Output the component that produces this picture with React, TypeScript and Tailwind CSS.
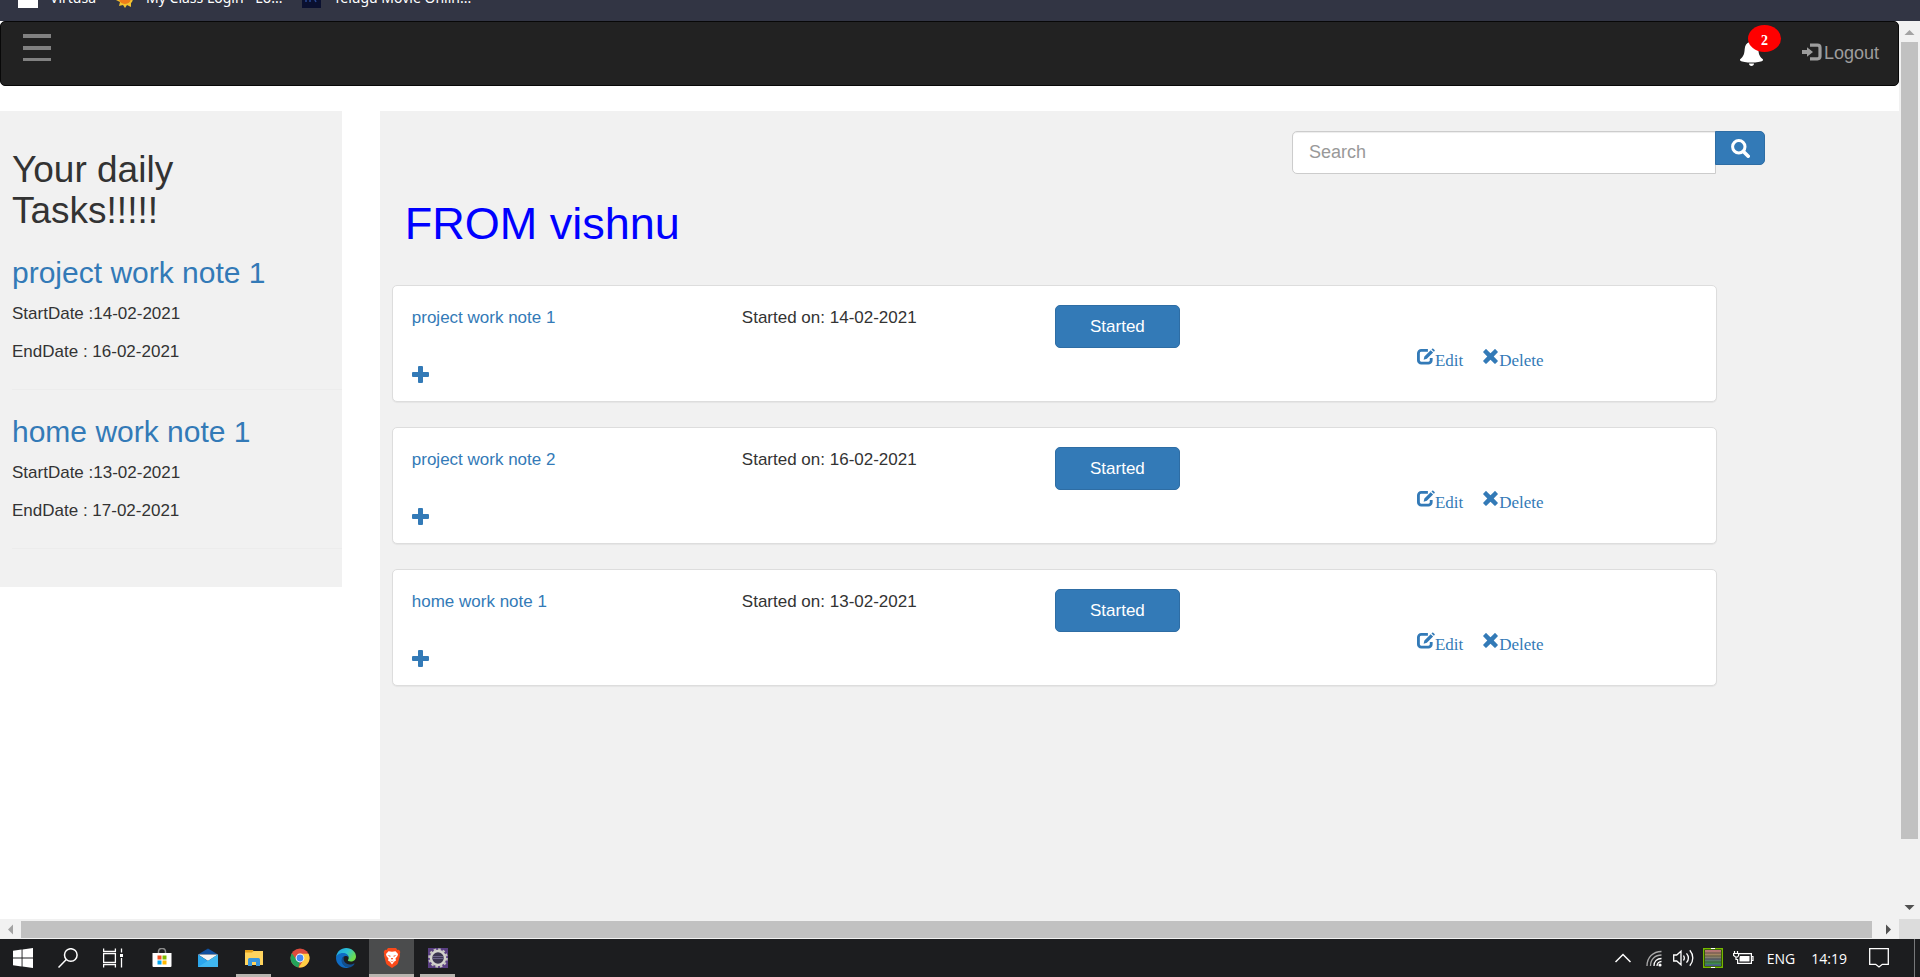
import React from "react";

type Task = { title: string; start: string; end: string };
type Note = { title: string; started: string };

const tasks: Task[] = [
  { title: "project work note 1", start: "14-02-2021", end: "16-02-2021" },
  { title: "home work note 1", start: "13-02-2021", end: "17-02-2021" },
];

const notes: Note[] = [
  { title: "project work note 1", started: "14-02-2021" },
  { title: "project work note 2", started: "16-02-2021" },
  { title: "home work note 1", started: "13-02-2021" },
];

/* ---------- Glyph icons ---------- */

const MenuIcon = () => (
  <svg width="28" height="28" viewBox="0 0 28 28" fill="#818181" aria-hidden="true">
    <path d="M0 0h28v4H0zM0 12h28v4H0zM0 24h28v3H0z" />
  </svg>
);

const BellIcon = () => (
  <svg width="23" height="26" viewBox="0 0 23 26" fill="#fff" aria-hidden="true">
    <path d="M11.500 0c1.200 0 1.800.8 1.800 2 3.300.9 4.700 3.500 5 7 .3 4.500 1 7.200 4.300 10 .6.600.5 1.200-.1 1.700-1.600 1.200-6 1.800-11 1.800s-9.400-.6-11-1.800c-.6-.5-.7-1.100-.1-1.700 3.300-2.800 4-5.500 4.300-10 .3-3.500 1.700-6.100 5-7 0-1.200.6-2 1.800-2zM9 23.500h5c0 1.500-1 2.500-2.500 2.500S9 25 9 23.500z" />
  </svg>
);

const LoginIcon = () => (
  <svg width="20" height="18" viewBox="0 0 20 18" aria-hidden="true">
    <path d="M0 7h5V4.200l6 4.800-6 4.800V11H0z" fill="#9d9d9d" />
    <path d="M8 2.200h7.500a2.500 2.500 0 0 1 2.500 2.500v8.600a2.500 2.500 0 0 1-2.500 2.500H8" fill="none" stroke="#9d9d9d" strokeWidth="3.200" />
  </svg>
);

const SearchIcon = () => (
  <svg width="19" height="19" viewBox="0 0 19 19" fill="none" stroke="#fff" aria-hidden="true">
    <circle cx="7.800" cy="7.800" r="6.200" strokeWidth="3" />
    <path d="M12.400 12.400l4.800 4.800" strokeWidth="3.600" strokeLinecap="round" />
  </svg>
);

const PlusIcon = () => (
  <svg width="17" height="17" viewBox="0 0 17 17" fill="#337ab7" aria-hidden="true">
    <path d="M7 0h3a1 1 0 0 1 1 1v5h5a1 1 0 0 1 1 1v3a1 1 0 0 1-1 1h-5v5a1 1 0 0 1-1 1H7a1 1 0 0 1-1-1v-5H1a1 1 0 0 1-1-1V7a1 1 0 0 1 1-1h5V1a1 1 0 0 1 1-1z" />
  </svg>
);

const EditIcon = () => (
  <svg width="18" height="17" viewBox="0 0 19 17" aria-hidden="true">
    <path d="M11.500 2H4.500A3 3 0 0 0 1.500 5v7.500a3 3 0 0 0 3 3h7.500a3 3 0 0 0 3-3V10" fill="none" stroke="#337ab7" strokeWidth="3" />
    <path d="M7 12l.8-3.600 6.600-6.600 2.600 2.600-6.600 6.600zM15.300 1l.8-.8c.3-.3.700-.3 1 0l1.500 1.500c.3.300.3.700 0 1l-.8.800z" fill="#337ab7" />
  </svg>
);

const RemoveIcon = () => (
  <svg width="15" height="15" viewBox="0 0 15 15" fill="#337ab7" aria-hidden="true">
    <path d="M3.600.4l3.900 3.900L11.400.4c.4-.4.800-.4 1.200 0l2 2c.4.400.4.800 0 1.200L10.700 7.500l3.900 3.900c.4.400.4.800 0 1.200l-2 2c-.4.400-.8.400-1.200 0l-3.900-3.900-3.900 3.900c-.4.400-.8.400-1.200 0l-2-2c-.4-.4-.4-.8 0-1.200l3.900-3.900L.4 3.600C0 3.200 0 2.800.4 2.400l2-2c.4-.4.800-.4 1.200 0z" />
  </svg>
);

/* ---------- Browser chrome ---------- */

const BookmarksBar = () => (
  <div className="h-[21px] shrink-0 overflow-hidden bg-[#323544]">
    <div className="-mt-3.5 flex h-6 items-center whitespace-nowrap pl-[18px] font-['Noto_Sans','Open_Sans',sans-serif] text-[14px] leading-6 text-white">
      <span className="flex items-center gap-3">
        <svg width="20" height="20" viewBox="0 0 20 20" aria-hidden="true"><path d="M0 0h20v20H0z" fill="#fff" /></svg>
        Virtusa
      </span>
      <span className="ml-5 flex items-center gap-3">
        <svg width="18" height="20" viewBox="0 0 18 20" aria-hidden="true">
          <path d="M0 6l4 1V1l5 4 5-4v6l4 2-2 5-1 1 0 4-4-2-2 3-2-3-4 1 1-4-4-2z" fill="#f2c230" />
          <circle cx="9" cy="10" r="6" fill="#ef7d1a" />
        </svg>
        My Class Login - Lo...
      </span>
      <span className="ml-5 flex items-center gap-3">
        <svg width="19" height="20" viewBox="0 0 19 20" aria-hidden="true">
          <path d="M0 0h19v20H0z" fill="#0a1030" />
          <path d="M4 8v6M8 8v6M11 8l3 6" stroke="#27468f" strokeWidth="1.500" />
        </svg>
        Telugu Movie Onlin...
      </span>
    </div>
  </div>
);

const VerticalScrollbar = () => (
  <div className="flex w-[21px] shrink-0 flex-col items-center bg-[#f1f1f1]" aria-hidden="true">
    <svg width="21" height="21" viewBox="0 0 21 21"><path d="M5.500 14L10.500 9l5 5z" fill="#a3a3a3" /></svg>
    <div className="mr-px w-[17px] grow-27 bg-[#c1c1c1]" />
    <div className="grow-2" />
    <svg width="21" height="21" viewBox="0 0 21 21"><path d="M5.500 7l5 5 5-5z" fill="#505050" /></svg>
  </div>
);

const HorizontalScrollbar = () => (
  <div className="flex h-5 shrink-0 items-center bg-[#f1f1f1]" aria-hidden="true">
    <svg width="21" height="20" viewBox="0 0 21 20"><path d="M13 5.500L8 10.500l5 5z" fill="#a3a3a3" /></svg>
    <div className="mt-px h-[17px] grow bg-[#c1c1c1]" />
    <svg width="27" height="20" viewBox="0 0 27 20"><path d="M14 5.500l5 5-5 5z" fill="#505050" /></svg>
    <div className="h-5 w-[21px] bg-[#dcdcdc]" />
  </div>
);

/* ---------- Page ---------- */

const Navbar = () => (
  <nav className="flex h-[65px] items-start justify-between rounded-[5px] border border-[#080808] bg-[#222]">
    <button type="button" aria-label="Open menu" className="ml-[22px] mt-3">
      <MenuIcon />
    </button>
    <div className="flex items-start pr-[19px]">
      <button type="button" aria-label="Notifications" className="relative mr-[39px] mt-[18px]">
        <BellIcon />
        <span className="absolute -top-[15px] left-2 flex h-[27px] w-[33px] items-center justify-center rounded-[50%] bg-[red] pt-1 font-['Liberation_Serif',serif] text-[14px] font-bold leading-none text-white">
          2
        </span>
      </button>
      <a href="#logout" className="mt-[19px] flex items-start gap-[2px] text-[18px] leading-[25px] text-[#9d9d9d]">
        <span className="pt-0.5"><LoginIcon /></span>
        Logout
      </a>
    </div>
  </nav>
);

const Sidebar = () => (
  <aside className="w-[18%] shrink-0 self-start bg-[#f1f1f1] pb-[38px] pl-3 pt-[38px]">
    <h2 className="w-[200px] text-[37px] leading-[41px]">Your daily Tasks!!!!!</h2>
    {tasks.map((task) => (
      <section key={task.title} className="border-b border-[#ececec] pb-[25px] pt-[25px]">
        <h3 className="text-[30px] leading-[33px]">
          <a href="#task" className="text-[#337ab7]">{task.title}</a>
        </h3>
        <p className="mt-[12px]">StartDate :{task.start}</p>
        <p className="mt-[13px]">EndDate : {task.end}</p>
      </section>
    ))}
  </aside>
);

const NoteCard = ({ note }: { note: Note }) => (
  <article className="grid h-[117px] grid-cols-[330fr_313fr_362fr_280fr] rounded-[5px] border border-[#ddd] bg-white px-[19px] pt-[19px] shadow-[0_1px_1px_rgba(0,0,0,0.05)]">
    <div className="flex flex-col items-start">
      <a href="#note" className="text-[#337ab7]">{note.title}</a>
      <button type="button" aria-label={`Add to ${note.title}`} className="mt-[36px]">
        <PlusIcon />
      </button>
    </div>
    <p>Started on: {note.started}</p>
    <div>
      <button type="button" className="h-[43px] w-[125px] rounded-[5px] border border-[#2e6da4] bg-[#337ab7] text-white">
        Started
      </button>
    </div>
    <div className="mt-[43px] flex items-start gap-5 font-['Liberation_Serif',serif] text-[#337ab7]">
      <a href="#edit" className="flex items-start">
        <EditIcon />
        Edit
      </a>
      <a href="#delete" className="flex items-start">
        <span className="pr-px pt-px"><RemoveIcon /></span>
        Delete
      </a>
    </div>
  </article>
);

const Main = () => (
  <main className="ml-[2%] min-w-0 flex-1 bg-[#f1f1f1] pl-3 pt-5">
    <form className="mr-[134px] flex items-start justify-end" onSubmit={(e) => e.preventDefault()}>
      <input
        type="text"
        aria-label="Search"
        placeholder="Search"
        className="-mr-px h-[43px] w-[424px] rounded-l-[5px] border border-[#ccc] bg-white px-4 text-[18px] shadow-[inset_0_1px_1px_rgba(0,0,0,0.075)] outline-none placeholder:text-[#999]"
      />
      <button
        type="submit"
        aria-label="Submit search"
        className="flex h-[34px] w-[50px] items-center justify-center rounded-r-[5px] border border-[#2e6da4] bg-[#337ab7]"
      >
        <SearchIcon />
      </button>
    </form>
    <h1 className="ml-[13px] mt-[25px] text-[45px] leading-[50px] text-[blue]">FROM vishnu</h1>
    <div className="mr-[182px] mt-[36px] flex flex-col gap-[25px]">
      {notes.map((note) => (
        <NoteCard key={note.title} note={note} />
      ))}
    </div>
  </main>
);

/* ---------- Taskbar ---------- */

const WindowsLogo = () => (
  <svg width="20" height="20" viewBox="0 0 20 20" fill="#fff" aria-hidden="true">
    <path d="M0 2.700l8.600-1.200v8H0zM9.500 1.400L20 0v9.500H9.500zM0 10.500h8.600v8L0 17.300zM9.500 10.500H20V20L9.500 18.600z" />
  </svg>
);

const TaskSearch = () => (
  <svg width="20" height="20" viewBox="0 0 20 20" fill="none" stroke="#fff" strokeWidth="1.500" aria-hidden="true">
    <circle cx="12.800" cy="7" r="6.300" />
    <path d="M8.300 11.500L.5 19.500" />
  </svg>
);

const TaskView = () => (
  <svg width="20" height="20" viewBox="0 0 20 20" fill="none" stroke="#fff" strokeWidth="1.300" aria-hidden="true">
    <path d="M.6.500v3h11.800v-3M.6 19.500v-3h11.800v3M.6 5.600h11.800v8.800H.6zM18.500.5v4M18.500 10v9.500" />
    <path d="M17 6h3v3h-3z" fill="#fff" stroke="none" />
  </svg>
);

const StoreIcon = () => (
  <svg width="20" height="20" viewBox="0 0 20 20" aria-hidden="true">
    <path d="M6.500 5V3.500a3 3 0 0 1 3-3h1a3 3 0 0 1 3 3V5" fill="none" stroke="#8b8b8b" strokeWidth="1.500" />
    <path d="M.5 5h19v13a1 1 0 0 1-1 1h-17a1 1 0 0 1-1-1z" fill="#fff" />
    <path d="M5.500 7.500h4v4h-4z" fill="#f25022" />
    <path d="M10.500 7.500h4v4h-4z" fill="#7fba00" />
    <path d="M5.500 12.500h4v4h-4z" fill="#00a4ef" />
    <path d="M10.500 12.500h4v4h-4z" fill="#ffb900" />
  </svg>
);

const MailIcon = () => (
  <svg width="20" height="20" viewBox="0 0 20 20" aria-hidden="true">
    <path d="M10 .5l10 6H0z" fill="#0f4f9e" />
    <path d="M0 6.500h20L10 13z" fill="#f4f4f4" />
    <path d="M0 6.500l10 6.500 10-6.500V19H0z" fill="#2ba6ec" />
    <path d="M20 6.500L0 19h20z" fill="#4cc3f4" opacity="0.600" />
  </svg>
);

const ExplorerIcon = () => (
  <svg width="20" height="20" viewBox="0 0 20 20" aria-hidden="true">
    <path d="M1 2h8l1 2v3H1z" fill="#e5a11b" />
    <path d="M1 4.500h7L9.500 3H19v14H1z" fill="#ffd45e" />
    <path d="M4 18v-6.500a1.500 1.500 0 0 1 1.500-1.500h9a1.500 1.500 0 0 1 1.500 1.500V18h-4v-4H8v4z" fill="#3a96dd" />
  </svg>
);

const ChromeIcon = () => (
  <svg width="20" height="20" viewBox="0 0 20 20" aria-hidden="true">
    <circle cx="10" cy="10" r="9.500" fill="#dd4b3e" />
    <path d="M1.800 5.200L7.200 12.500 10 14l-1.600 5.400A9.500 9.500 0 0 1 1.800 5.200z" fill="#23a35a" />
    <path d="M10 5.800h8.500A9.500 9.500 0 0 1 8.600 19.400L13.500 12z" fill="#ffce44" />
    <circle cx="10" cy="10" r="4.400" fill="#fff" />
    <circle cx="10" cy="10" r="3.400" fill="#4587f3" />
  </svg>
);

const EdgeIcon = () => (
  <svg width="20" height="20" viewBox="0 0 20 20" aria-hidden="true">
    <defs>
      <linearGradient id="edgeTop" x1="0" y1="0" x2="1" y2="0.500">
        <stop offset="0" stopColor="#1fa0e6" />
        <stop offset="0.550" stopColor="#2cc3d3" />
        <stop offset="1" stopColor="#6fdc4a" />
      </linearGradient>
    </defs>
    <path d="M.2 9C.6 3.800 5 0 10.200 0 16 0 20 4.200 20 8.500c0 3-2.400 5-5.200 5-2.300 0-3.300-.8-2.800-1.500.4-.6.700-1.200.7-2C12.700 7.500 10.500 6 8 6 4.500 6 1.500 7.500.2 9z" fill="url(#edgeTop)" />
    <path d="M0 10c0-2.800 3.200-5 7-5 3.300 0 5.500 2 5.700 4.300C12 8.500 10.500 8 9.500 8 7 8.200 5.800 10.500 6 12.500 6.300 16.500 10 19.500 13.500 19.400 12.500 19.800 11 20 10 20 4.500 20 0 15.500 0 10z" fill="#0f6cc4" />
    <path d="M8 9c-1.500 3.500 1.500 7.500 6 7.500 1.800 0 3-.5 4-1 .5-.2.800.2.500.6C17 18.200 15 19.500 13 19.500 9 19.500 5.500 16 5.500 12.500 5.500 10.800 6.500 9.500 8 9z" fill="#134f8e" />
  </svg>
);

const BraveIcon = () => (
  <svg width="20" height="20" viewBox="0 0 20 20" aria-hidden="true">
    <path d="M6 0h8l1.500 2 1.500-.3L18.300 4l-.6 2 .3 1.500-2 7.500c-.3 1-.8 1.500-1.500 2L10 20l-4.500-3c-.7-.5-1.200-1-1.500-2L2 7.500 2.300 6l-.6-2L3 1.700 4.500 2z" fill="#fb4a1a" />
    <path d="M6.500 3.300L10 3.800l3.500-.5L16 6l-.5 2-2 2.500.5 2-2 1.300L10 16.500l-2-2.700-2-1.300.5-2-2-2.500L4 6z" fill="#fff" />
    <path d="M5.500 7l3 .8-.3 1.200zM14.500 7l-3 .8.3 1.200zM8.800 10h2.400L10 12zM8 12.500l2 1 2-1-2 1.700z" fill="#fb4a1a" />
  </svg>
);

const GearIcon = () => (
  <svg width="20" height="20" viewBox="0 0 20 20" aria-hidden="true">
    <path d="M0 0h20v20H0z" fill="#5a3f83" />
    <circle cx="10" cy="10" r="8.800" fill="none" stroke="#c4c4be" strokeWidth="2" strokeDasharray="2.600 2" />
    <circle cx="10" cy="10" r="7" fill="#3b3550" stroke="#d3d3cd" strokeWidth="2.500" />
    <path d="M5 8.500h10M4.500 10.500h11" stroke="#6a6288" strokeWidth="1" />
  </svg>
);

type App = { name: string; icon: React.ReactNode; state?: "open" | "active" };

const systemApps: App[] = [
  { name: "Start", icon: <WindowsLogo /> },
  { name: "Find", icon: <TaskSearch /> },
  { name: "Task View", icon: <TaskView /> },
];

const pinnedApps: App[] = [
  { name: "Store", icon: <StoreIcon /> },
  { name: "Mail", icon: <MailIcon /> },
  { name: "Explorer", icon: <ExplorerIcon />, state: "open" },
  { name: "Chrome", icon: <ChromeIcon /> },
  { name: "Edge", icon: <EdgeIcon /> },
  { name: "Brave", icon: <BraveIcon />, state: "active" },
  { name: "Eclipse", icon: <GearIcon />, state: "open" },
];

const TaskButton = ({ app }: { app: App }) => (
  <button
    type="button"
    aria-label={app.name}
    className={`flex h-[38px] w-[45px] flex-col items-center justify-between pt-[9px] ${app.state === "active" ? "bg-[#4b4c4d]" : ""}`}
  >
    {app.icon}
    {app.state && <span className={`h-[3px] bg-[#b8b4af] ${app.state === "active" ? "w-full" : "w-[35px]"}`} />}
  </button>
);

const Taskbar = () => (
  <footer className="flex h-[38px] shrink-0 items-center justify-between bg-[#1c1d1f] text-white">
    <div className="flex">
      {systemApps.map((app) => (
        <TaskButton key={app.name} app={app} />
      ))}
      <div className="ml-1 flex gap-px">
        {pinnedApps.map((app) => (
          <TaskButton key={app.name} app={app} />
        ))}
      </div>
    </div>
    <div className="flex h-full items-center font-['Open_Sans','Noto_Sans',sans-serif] text-[14px]">
      <svg className="mr-[15px]" width="16" height="10" viewBox="0 0 16 10" fill="none" stroke="#fff" strokeWidth="1.500" aria-hidden="true">
        <path d="M.5 9L8 1.500 15.500 9" />
      </svg>
      <svg className="mr-[11px]" width="16" height="17" viewBox="0 0 16 17" fill="none" strokeWidth="1.300" aria-hidden="true">
        <path d="M1 16C1 7.500 7 1.500 15.500 1.500M4.500 16C4.500 9.500 9 5 15.500 5" stroke="#a8a8a8" />
        <path d="M8 16c0-4.500 3-7.500 7.500-7.500M11 16c0-2.500 2-4.500 4.500-4.500" stroke="#fff" />
        <circle cx="14" cy="15" r="1.600" fill="#fff" />
      </svg>
      <svg className="mr-[9px]" width="21" height="18" viewBox="0 0 21 18" fill="none" stroke="#fff" strokeWidth="1.300" aria-hidden="true">
        <path d="M.7 6h3L8 2.200v13.600L3.700 12h-3zM10.500 6.500c1 1.500 1 3.500 0 5M13.500 4.300c2.300 2.800 2.300 6.600 0 9.400M16.800 1.200c4 4.600 4 11 0 15.600" />
      </svg>
      <svg className="mr-2.5" width="20" height="20" viewBox="0 0 20 20" aria-hidden="true">
        <defs>
          <linearGradient id="chipFill" x1="0" y1="0" x2="0" y2="1">
            <stop offset="0" stopColor="#b8727a" />
            <stop offset="0.350" stopColor="#9f8a5c" />
            <stop offset="0.600" stopColor="#65707f" />
            <stop offset="0.800" stopColor="#3c9a3c" />
            <stop offset="1" stopColor="#4a4a9c" />
          </linearGradient>
        </defs>
        <path d="M.7.700h18.600v18.600H.7z" fill="#0d1a0d" stroke="#76b900" strokeWidth="1.400" />
        <path d="M2 2h16v16H2z" fill="url(#chipFill)" />
        <path d="M2 5h16M2 8h16M2 11h16M2 14h16" stroke="#333" strokeWidth="0.600" />
        <path d="M8 0h4v1H8zM8 19h4v1H8z" fill="#fff" />
      </svg>
      <svg className="mr-[13px]" width="21" height="14" viewBox="0 0 21 14" fill="none" stroke="#fff" strokeWidth="1.200" aria-hidden="true">
        <path d="M6 2.600h12.400v9.800H4.600V8M18.400 5.500H20v4h-1.600M1.500 0v2.500M4.500 0v2.500M.6 2.500h5v2L4.500 6h-2L.6 4.500zM3 6v2.500h1.500" />
        <path d="M7 5h9.500v5.500H6.500V7z" fill="#fff" stroke="none" />
      </svg>
      <span className="mr-4">ENG</span>
      <span className="mr-[22px]">14:19</span>
      <svg className="mr-[25px]" width="20" height="20" viewBox="0 0 20 20" fill="none" stroke="#fff" strokeWidth="1.300" aria-hidden="true">
        <path d="M.7.700h18.600v15.600h-6L10 19l-3.300-2.700h-6z" />
      </svg>
      <div className="mr-[5px] h-full w-px bg-[#77787a]" />
    </div>
  </footer>
);

export default function App() {
  return (
    <div className="flex h-screen flex-col overflow-hidden bg-white font-['Liberation_Sans',Arial,sans-serif] text-[17px] leading-[25px] text-[#333]">
      <BookmarksBar />
      <div className="flex min-h-0 flex-1">
        <div className="flex min-w-0 flex-1 flex-col overflow-hidden">
          <Navbar />
          <div className="mt-[25px] flex min-h-0 flex-1">
            <Sidebar />
            <Main />
          </div>
        </div>
        <VerticalScrollbar />
      </div>
      <HorizontalScrollbar />
      <Taskbar />
    </div>
  );
}
